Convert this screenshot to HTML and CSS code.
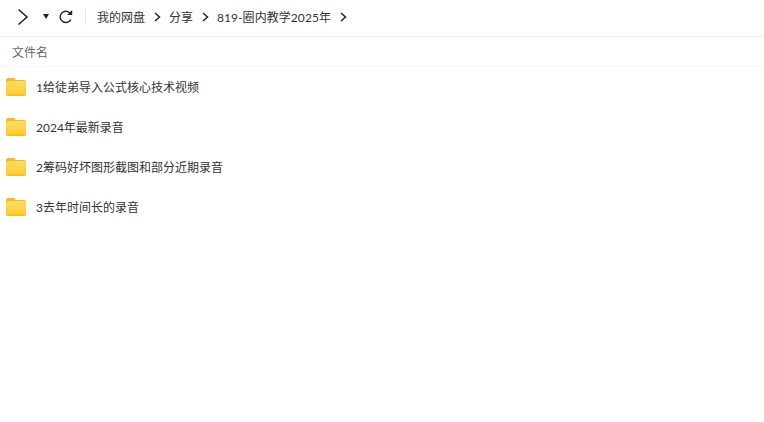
FILE: index.html
```html
<!DOCTYPE html>
<html lang="zh-CN">
<head>
<meta charset="utf-8">
<title>819-圈内教学2025年</title>
<link rel="stylesheet" href="styles.css">
</head>
<body>
<header class="toolbar">
  <svg class="icon-forward" width="12" height="18" viewBox="0 0 12 18"><path d="M1.500 1.500l8.500 7.500-8.500 7.500" fill="none" stroke="#1f1f1f" stroke-width="1.500"/></svg>
  <svg class="icon-drop" width="6" height="5" viewBox="0 0 6 5"><path d="M0 0h6L3 5z" fill="#222"/></svg>
  <svg class="icon-refresh" width="14" height="14" viewBox="0 0 14 14"><path d="M11.800 9.500A5.600 5.600 0 1 1 10.800 3" fill="none" stroke="#222" stroke-width="1.500"/><path d="M8.200 5h5V0z" fill="#222"/></svg>
  <span class="divider"></span>
  <nav class="crumbs">
    <span>我的网盘</span><svg class="sep" width="7" height="10" viewBox="0 0 7 10"><path d="M1 1l4.500 4L1 9" fill="none" stroke="#222" stroke-width="1.500"/></svg>
    <span>分享</span><svg class="sep" width="7" height="10" viewBox="0 0 7 10"><path d="M1 1l4.500 4L1 9" fill="none" stroke="#222" stroke-width="1.500"/></svg>
    <span class="current">819-圈内教学2025年</span><svg class="sep" width="7" height="10" viewBox="0 0 7 10"><path d="M1 1l4.500 4L1 9" fill="none" stroke="#222" stroke-width="1.500"/></svg>
  </nav>
</header>
<div class="head">文件名</div>
<ul class="list">
  <li class="row"><svg class="folder" width="20" height="18" viewBox="0 0 20 18"><use href="#f"/></svg><span>1给徒弟导入公式核心技术视频</span></li>
  <li class="row"><svg class="folder" width="20" height="18" viewBox="0 0 20 18"><use href="#f"/></svg><span>2024年最新录音</span></li>
  <li class="row"><svg class="folder" width="20" height="18" viewBox="0 0 20 18"><use href="#f"/></svg><span>2筹码好坏图形截图和部分近期录音</span></li>
  <li class="row"><svg class="folder" width="20" height="18" viewBox="0 0 20 18"><use href="#f"/></svg><span>3去年时间长的录音</span></li>
</ul>
<svg width="0" height="0" class="defs"><defs>
  <linearGradient id="g" x1="0" y1="0" x2="0" y2="1"><stop offset="0" stop-color="#ffdc62"/><stop offset="1" stop-color="#ffc92e"/></linearGradient>
  <g id="f"><path d="M0 2a2 2 0 0 1 2-2h6l2 2h8a2 2 0 0 1 2 2v4H0z" fill="#f9b81e"/><rect x="0" y="3" width="20" height="15" rx="2" fill="url(#g)"/><path d="M0 16.500h20a2 2 0 0 1-2 1.500H2a2 2 0 0 1-2-1.500z" fill="#fbb91f"/></g>
</defs></svg>
</body>
</html>
```

FILE: styles.css
```css
* { box-sizing: border-box; }
html, body { margin: 0; padding: 0; background: #fff; }
body {
  width: 764px;
  height: 422px;
  overflow: hidden;
  font-family: Lato, "Noto Sans CJK SC", sans-serif;
  font-size: 12px;
  color: #333;
}
.toolbar {
  display: flex;
  align-items: center;
  height: 37px;
  padding: 0 0 3px 17px;
  border-bottom: 1px solid #f0f0f0;
}
.icon-drop { margin-left: 14px; }
.icon-refresh { margin-left: 10px; }
.divider { width: 1px; height: 16px; background: #e6e6e6; margin: 0 11px 0 12px; }
.crumbs { display: flex; align-items: center; color: #333; }
.sep { margin: 0 8px 0 9px; }
.current { letter-spacing: 0.06px; }
.head {
  height: 30px;
  line-height: 30px;
  padding: 1px 0 0 12px;
  color: #666;
  border-bottom: 1px solid #f5f5f5;
}
.list { list-style: none; margin: 0; padding: 0; }
.row {
  display: flex;
  align-items: center;
  height: 40px;
  padding-left: 6px;
  color: #333;
}
.row span { margin-top: -1px; }
.folder { margin-right: 10px; }
.defs { position: absolute; }
```
